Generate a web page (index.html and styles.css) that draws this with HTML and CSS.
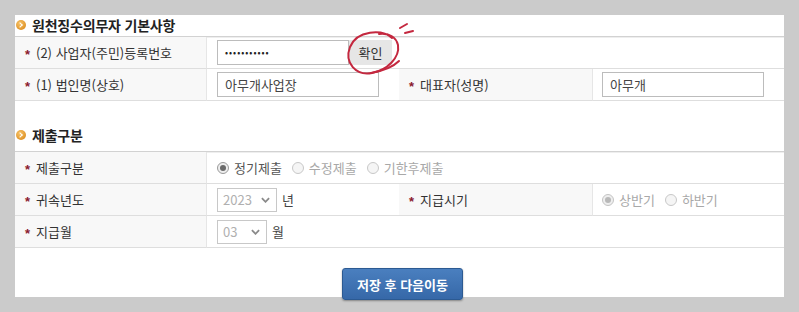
FILE: index.html
```html
<!DOCTYPE html>
<html lang="ko">
<head>
<meta charset="utf-8">
<link rel="stylesheet" href="styles.css">
</head>
<body>
<div class="panel">
  <div class="sec-title first"><span class="bullet"></span>원천징수의무자 기본사항</div>
  <div class="form-grid">
    <div class="lbl"><span class="req">*</span>(2) 사업자(주민)등록번호</div>
    <div class="val span3">
      <div class="field pw">•••••••••••</div><div class="btn-check">확인</div>
    </div>
    <div class="lbl"><span class="req">*</span>(1) 법인명(상호)</div>
    <div class="val"><div class="field wide">아무개사업장</div></div>
    <div class="lbl"><span class="req">*</span>대표자(성명)</div>
    <div class="val v2"><div class="field wide">아무개</div></div>
  </div>

  <div class="sec-title second"><span class="bullet"></span>제출구분</div>
  <div class="form-grid">
    <div class="lbl"><span class="req">*</span>제출구분</div>
    <div class="val span3">
      <span class="radio on"></span><span class="rtext dark">정기제출</span>
      <span class="radio"></span><span class="rtext">수정제출</span>
      <span class="radio"></span><span class="rtext">기한후제출</span>
    </div>
    <div class="lbl"><span class="req">*</span>귀속년도</div>
    <div class="val">
      <div class="sel y"><span>2023</span><svg class="chev" viewBox="0 0 10 6"><path d="M1 1 L5 5 L9 1"/></svg></div><span class="unit">년</span>
    </div>
    <div class="lbl"><span class="req">*</span>지급시기</div>
    <div class="val v2">
      <span class="radio on dis"></span><span class="rtext">상반기</span>
      <span class="radio"></span><span class="rtext">하반기</span>
    </div>
    <div class="lbl"><span class="req">*</span>지급월</div>
    <div class="val span3">
      <div class="sel m"><span>03</span><svg class="chev" viewBox="0 0 10 6"><path d="M1 1 L5 5 L9 1"/></svg></div><span class="unit">월</span>
    </div>
  </div>

  <div class="footer"><button class="save">저장 후 다음이동</button></div>

  <svg class="mark" viewBox="15 15 769 282" width="769" height="282">
    <path d="M392 38 C382 29, 357 30, 350 47 C344 63, 356 76, 372 73 C387 70, 400 58, 398 45 C396 37, 389 33, 379 34" />
    <path d="M371 73 C382 71, 393 67, 399 61" />
    <path d="M400 28 L407 24" />
    <path d="M405 33 L413 31" />
  </svg>
</div>
</body>
</html>
```
FILE: styles.css
```css
* { box-sizing: border-box; }
html, body { margin: 0; padding: 0; }
body {
  background: #cbcbcb;
  width: 799px;
  height: 312px;
  overflow: hidden;
  font-family: "Noto Sans CJK KR", "Noto Sans", sans-serif;
  color: #333;
}
.panel {
  position: relative;
  margin: 15px 0 0 15px;
  width: 769px;
  height: 282px;
  background: #fff;
}
.sec-title {
  display: flex;
  align-items: center;
  font-size: 14px;
  font-weight: bold;
  color: #222;
  padding-left: 1px;
  letter-spacing: -0.2px;
}
.sec-title.first { height: 21px; padding-bottom: 2px; }
.sec-title.second { height: 50px; align-items: flex-end; padding-bottom: 6px; }
.sec-title.second .bullet { margin-bottom: 5px; }
.bullet {
  width: 10px;
  height: 10px;
  border-radius: 50%;
  background: radial-gradient(circle at 40% 35%, #f7c46a, #e0952a 70%, #c97a1c);
  margin-right: 6px;
  position: relative;
  flex: none;
}
.bullet::after {
  content: "";
  position: absolute;
  left: 2px;
  top: 3px;
  width: 3px;
  height: 3px;
  border-top: 1.3px solid #fff;
  border-right: 1.3px solid #fff;
  transform: rotate(45deg);
}
.form-grid {
  display: grid;
  grid-template-columns: 192px 192px 194px 1fr;
  border-top: 1px solid #d2d2d2;
  box-shadow: inset 0 1px 0 #eee;
}
.lbl, .val {
  height: 32px;
  border-bottom: 1px solid #dedede;
  display: flex;
  align-items: center;
  font-size: 13px;
}
.lbl {
  background: #f8f8f8;
  border-right: 1px solid #e6e6e6;
  padding-left: 10px;
  color: #333;
}
.req {
  color: #8a1a2e;
  font-family: "Liberation Sans", sans-serif;
  font-weight: bold;
  font-size: 13px;
  width: 11px;
  height: 12px;
  line-height: 12px;
  padding-top: 2px;
  flex: none;
}
.val { padding-left: 10px; }
.val.v2 { padding-left: 9px; }
.val.span3 { grid-column: span 3; }
.field {
  height: 25px;
  border: 1px solid #bcbcbc;
  display: flex;
  align-items: center;
  padding-left: 7px;
  font-size: 13px;
  color: #444;
  background: #fff;
}
.field.pw { width: 132px; font-size: 9px; letter-spacing: 1px; color: #222; }
.field.wide { width: 162px; }
.btn-check {
  width: 43px;
  height: 25px;
  background: #e6e6e6;
  display: flex;
  align-items: center;
  justify-content: center;
  font-size: 13px;
  color: #333;
}
.radio {
  width: 12px;
  height: 12px;
  border-radius: 50%;
  border: 1px solid #c8c8c8;
  background: #f5f5f5;
  margin-right: 5px;
  position: relative;
  flex: none;
}
.radio.on { border-color: #9a9a9a; background: #eee; }
.radio.on::after {
  content: "";
  position: absolute;
  left: 2px; top: 2px;
  width: 6px; height: 6px;
  border-radius: 50%;
  background: #6a6a6a;
}
.radio.on.dis { border-color: #c4c4c4; }
.radio.on.dis::after { background: #b8b8b8; }
.rtext { color: #a8a8a8; margin-right: 10px; font-size: 13px; }
.rtext.dark { color: #555; }
.sel {
  height: 24px;
  border: 1px solid #c8c8c8;
  display: flex;
  align-items: center;
  justify-content: space-between;
  padding: 0 6px 0 5px;
  color: #b0b0b0;
  font-size: 13px;
  margin-right: 5px;
}
.sel.y { width: 60px; }
.sel.m { width: 50px; }
.chev { width: 9px; height: 6px; fill: none; stroke: #8a8a8a; stroke-width: 2; }
.unit { color: #444; font-size: 13px; }
.footer {
  display: flex;
  justify-content: center;
  padding-top: 20px;
  padding-left: 6px;
}
.save {
  width: 121px;
  height: 32px;
  border: 1px solid #2c5a92;
  border-radius: 3px;
  background: linear-gradient(#4a7fbf, #3668a8);
  box-shadow: 0 1px 2px rgba(0,0,0,0.35);
  color: #fff;
  font-family: "Noto Sans CJK KR", sans-serif;
  font-weight: bold;
  font-size: 13px;
  padding: 0;
}
.mark {
  position: absolute;
  left: 0;
  top: 0;
  pointer-events: none;
  fill: none;
  stroke: #c4283f;
  stroke-width: 2;
  stroke-linecap: round;
}
```
